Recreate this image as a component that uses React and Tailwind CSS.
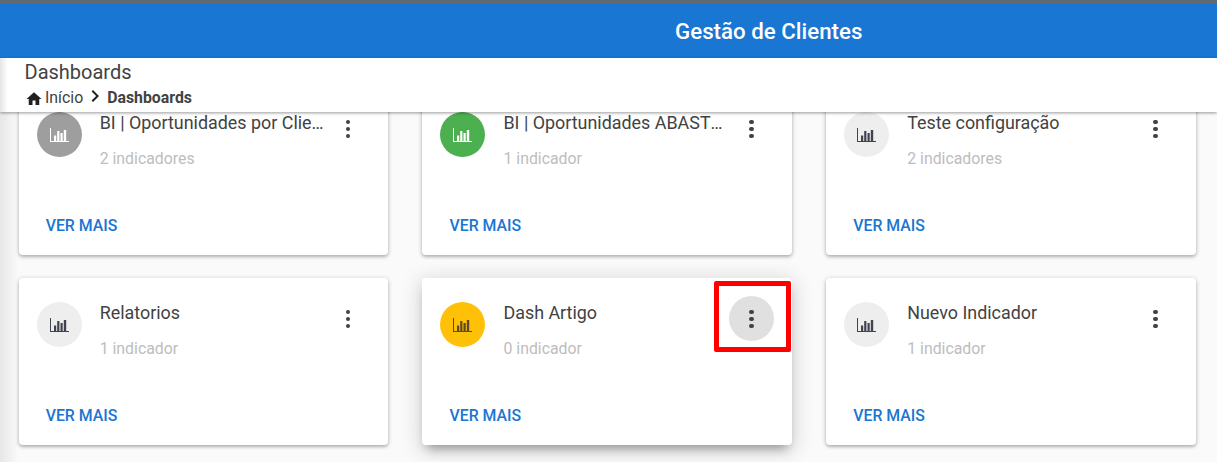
const font = { fontFamily: "Roboto, sans-serif" };

const cards = [
  { title: "BI | Oportunidades por Clientes", sub: "2 indicadores", avatar: "bg-[#9e9e9e]", icon: "#ffffff" },
  { title: "BI | Oportunidades ABASTECIMENTO", sub: "1 indicador", avatar: "bg-[#4caf50]", icon: "#ffffff" },
  { title: "Teste configuração", sub: "2 indicadores", avatar: "bg-[#eeeeee]", icon: "#3f4450" },
  { title: "Relatorios", sub: "1 indicador", avatar: "bg-[#eeeeee]", icon: "#3f4450" },
  { title: "Dash Artigo", sub: "0 indicador", avatar: "bg-[#ffc107]", icon: "#5d4a1f", active: true },
  { title: "Nuevo Indicador", sub: "1 indicador", avatar: "bg-[#eeeeee]", icon: "#3f4450" },
];

function ChartIcon({ color }) {
  return (
    <svg width="19" height="14" viewBox="0 0 19 14" fill={color}>
      <rect x="0" y="0" width="1" height="14" />
      <rect x="0" y="13" width="19" height="1" />
      <rect x="4" y="7.5" width="2.2" height="5.5" />
      <rect x="7.2" y="3" width="2.2" height="10" />
      <rect x="10.5" y="5" width="2.2" height="8" />
      <rect x="13.8" y="2" width="2.4" height="11" />
    </svg>
  );
}

function Kebab({ active }) {
  return (
    <div className={`relative w-[45px] h-[45px] shrink-0 rounded-full flex flex-col items-center justify-center gap-[2.5px] pt-[1px] ${active ? "bg-[#e0e0e0]" : ""}`}>
      <span className="w-[4.5px] h-[4.5px] rounded-full bg-[#424242]" />
      <span className="w-[4.5px] h-[4.5px] rounded-full bg-[#424242]" />
      <span className="w-[4.5px] h-[4.5px] rounded-full bg-[#424242]" />
      {active && (
        <div className="absolute left-[-15px] top-[-15px] w-[77px] h-[71px] border-[5px] border-[#ff0000] rounded-[2px]" />
      )}
    </div>
  );
}

function DashCard({ card }) {
  return (
    <div className={`bg-white rounded-[4px] h-[167px] flex flex-col ${card.active ? "shadow-[0_8px_10px_-5px_rgba(0,0,0,0.35),0_4px_20px_3px_rgba(0,0,0,0.14)]" : "shadow-[0_1px_5px_0_rgba(0,0,0,0.22),0_2px_3px_0_rgba(0,0,0,0.16)]"}`}>
      <div className="flex items-start pl-[18px] pr-[18px] pt-[18px]">
        <div className={`w-[45px] h-[45px] mt-[6px] rounded-full shrink-0 flex items-center justify-center ${card.avatar}`}>
          <ChartIcon color={card.icon} />
        </div>
        <div className="ml-[18px] flex-1 min-w-0 pt-[5px]">
          <div className="text-[17.9px] leading-6 text-[#424242] truncate">{card.title}</div>
          <div className="mt-[12px] text-[15.85px] leading-6 text-[#bdbdbd]">{card.sub}</div>
        </div>
        <Kebab active={card.active} />
      </div>
      <div className="mt-auto pl-[27px] pb-[17px] text-[15.85px] leading-6 font-medium text-[#1976d2]">VER MAIS</div>
    </div>
  );
}

export default function App() {
  return (
    <div className="h-screen flex flex-col overflow-hidden bg-[#fafafa]" style={font}>
      <header className="h-[58px] shrink-0 bg-[#1976d2] border-t-[4px] border-[#5f6b70] flex items-center pl-[675px] pt-[2px]">
        <h1 className="text-[22.3px] font-medium text-white">Gestão de Clientes</h1>
      </header>

      <div className="relative z-10 h-[54px] shrink-0 bg-white pl-[24.5px] pt-[3px] shadow-[0_1px_3px_rgba(0,0,0,0.4)]">
        <div className="text-xl leading-[22px] text-[#424242]">Dashboards</div>
        <div className="flex items-center h-6 mt-[3px] text-[15.85px] text-[#424242]">
          <svg width="18" height="18" viewBox="0 0 24 24" fill="#212121" className="mr-[2.5px] mt-[1px] shrink-0">
            <path d="M10 20v-6h4v6h5v-8h3L12 3 2 12h3v8z" />
          </svg>
          <span>Início</span>
          <svg width="24" height="24" viewBox="0 0 24 24" fill="#212121" className="mb-[5px] shrink-0">
            <path d="M10 6L8.59 7.41 13.17 12l-4.58 4.59L10 18l6-6z" />
          </svg>
          <span className="font-bold">Dashboards</span>
        </div>
        {/* sidebar shadow */}
        <div className="absolute left-0 top-0 bottom-0 w-[8px] bg-gradient-to-r from-black/10 to-transparent" />
      </div>

      <main className="relative flex-1 overflow-hidden pl-[18.7px] pr-[21px]">
        <div className="absolute left-0 top-0 bottom-0 w-[18px] bg-gradient-to-r from-black/8 to-transparent" />
        <div className="grid grid-cols-3 gap-x-[34px] gap-y-[23px] mt-[-24px]">
          {cards.map((card) => (
            <DashCard key={card.title} card={card} />
          ))}
        </div>
      </main>
    </div>
  );
}
